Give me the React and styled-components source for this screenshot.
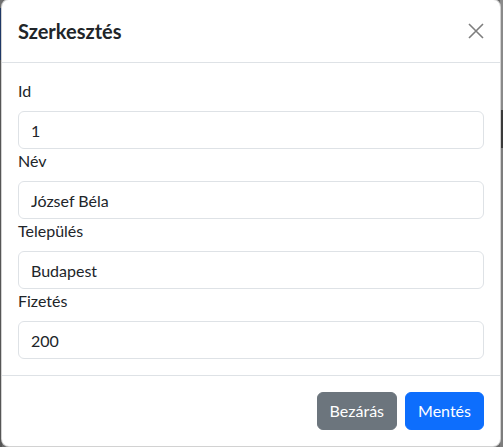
import React from 'react';
import styled, { createGlobalStyle } from 'styled-components';

const GlobalStyle = createGlobalStyle`
  * { box-sizing: border-box; }
  html, body {
    margin: 0;
    height: 100%;
  }
  body {
    font-family: Lato, "Noto Sans", sans-serif;
    color: #212529;
    background: #7a7a7a;
  }
`;

const Backdrop = styled.div`
  min-height: 447px;
  padding: 0 2px 0 1px;
  overflow: hidden;
  background:
    linear-gradient(to bottom, #6f6f6f 0 8px, #1f3866 8px 60px, #555 60px 100%) left / 2px 100% no-repeat,
    linear-gradient(to bottom, #8a8a8a 0 110px, #3a3a3a 110px 148px, #7d7d7d 148px 100%) right / 3px 100% no-repeat,
    #6a6a6a;
`;

const Modal = styled.div`
  margin-top: -1px;
  background: #fff;
  border: 1px solid rgba(0, 0, 0, 0.175);
  border-radius: 8px;
  overflow: hidden;
`;

const Header = styled.div`
  display: flex;
  align-items: center;
  justify-content: space-between;
  padding: 16px;
  border-bottom: 1px solid #dee2e6;
`;

const Title = styled.h5`
  margin: 0;
  font-size: 20px;
  font-weight: 700;
  line-height: 30px;
`;

const CloseButton = styled.button`
  width: 24px;
  height: 24px;
  padding: 4px;
  margin-right: -4px;
  border: 0;
  background: transparent;
  opacity: 0.5;
  display: flex;
  align-items: center;
  justify-content: center;
  cursor: pointer;
`;

const Body = styled.div`
  padding: 16px;
`;

const Label = styled.label`
  display: block;
  font-size: 16px;
  line-height: 24px;
  margin-bottom: 8px;
`;

const Input = styled.input`
  display: block;
  width: 100%;
  height: 38px;
  padding: 6px 12px;
  font: inherit;
  font-size: 16px;
  line-height: 24px;
  color: #212529;
  border: 1px solid #dee2e6;
  border-radius: 6px;
  background: #fff;
`;

const Footer = styled.div`
  display: flex;
  justify-content: flex-end;
  padding: 12px;
  border-top: 1px solid #dee2e6;
`;

const Button = styled.button`
  margin: 4px;
  height: 38px;
  padding: 6px 12px;
  font: inherit;
  font-size: 16px;
  line-height: 24px;
  color: #fff;
  border: 1px solid ${p => p.$bg};
  border-radius: 6px;
  background: ${p => p.$bg};
  cursor: pointer;
`;

const fields = [
  { label: 'Id', value: '1' },
  { label: 'Név', value: 'József Béla' },
  { label: 'Település', value: 'Budapest' },
  { label: 'Fizetés', value: '200' },
];

export default function App() {
  return (
    <>
      <GlobalStyle />
      <Backdrop>
        <Modal>
          <Header>
            <Title>Szerkesztés</Title>
            <CloseButton aria-label='Close'>
              <svg width='16' height='16' viewBox='0 0 16 16'>
                <path d='M1 1L15 15M15 1L1 15' stroke='#000' strokeWidth='1.6' />
              </svg>
            </CloseButton>
          </Header>
          <Body>
            {fields.map(f => (
              <div key={f.label}>
                <Label>{f.label}</Label>
                <Input defaultValue={f.value} />
              </div>
            ))}
          </Body>
          <Footer>
            <Button $bg='#6c757d'>Bezárás</Button>
            <Button $bg='#0d6efd'>Mentés</Button>
          </Footer>
        </Modal>
      </Backdrop>
    </>
  );
}
